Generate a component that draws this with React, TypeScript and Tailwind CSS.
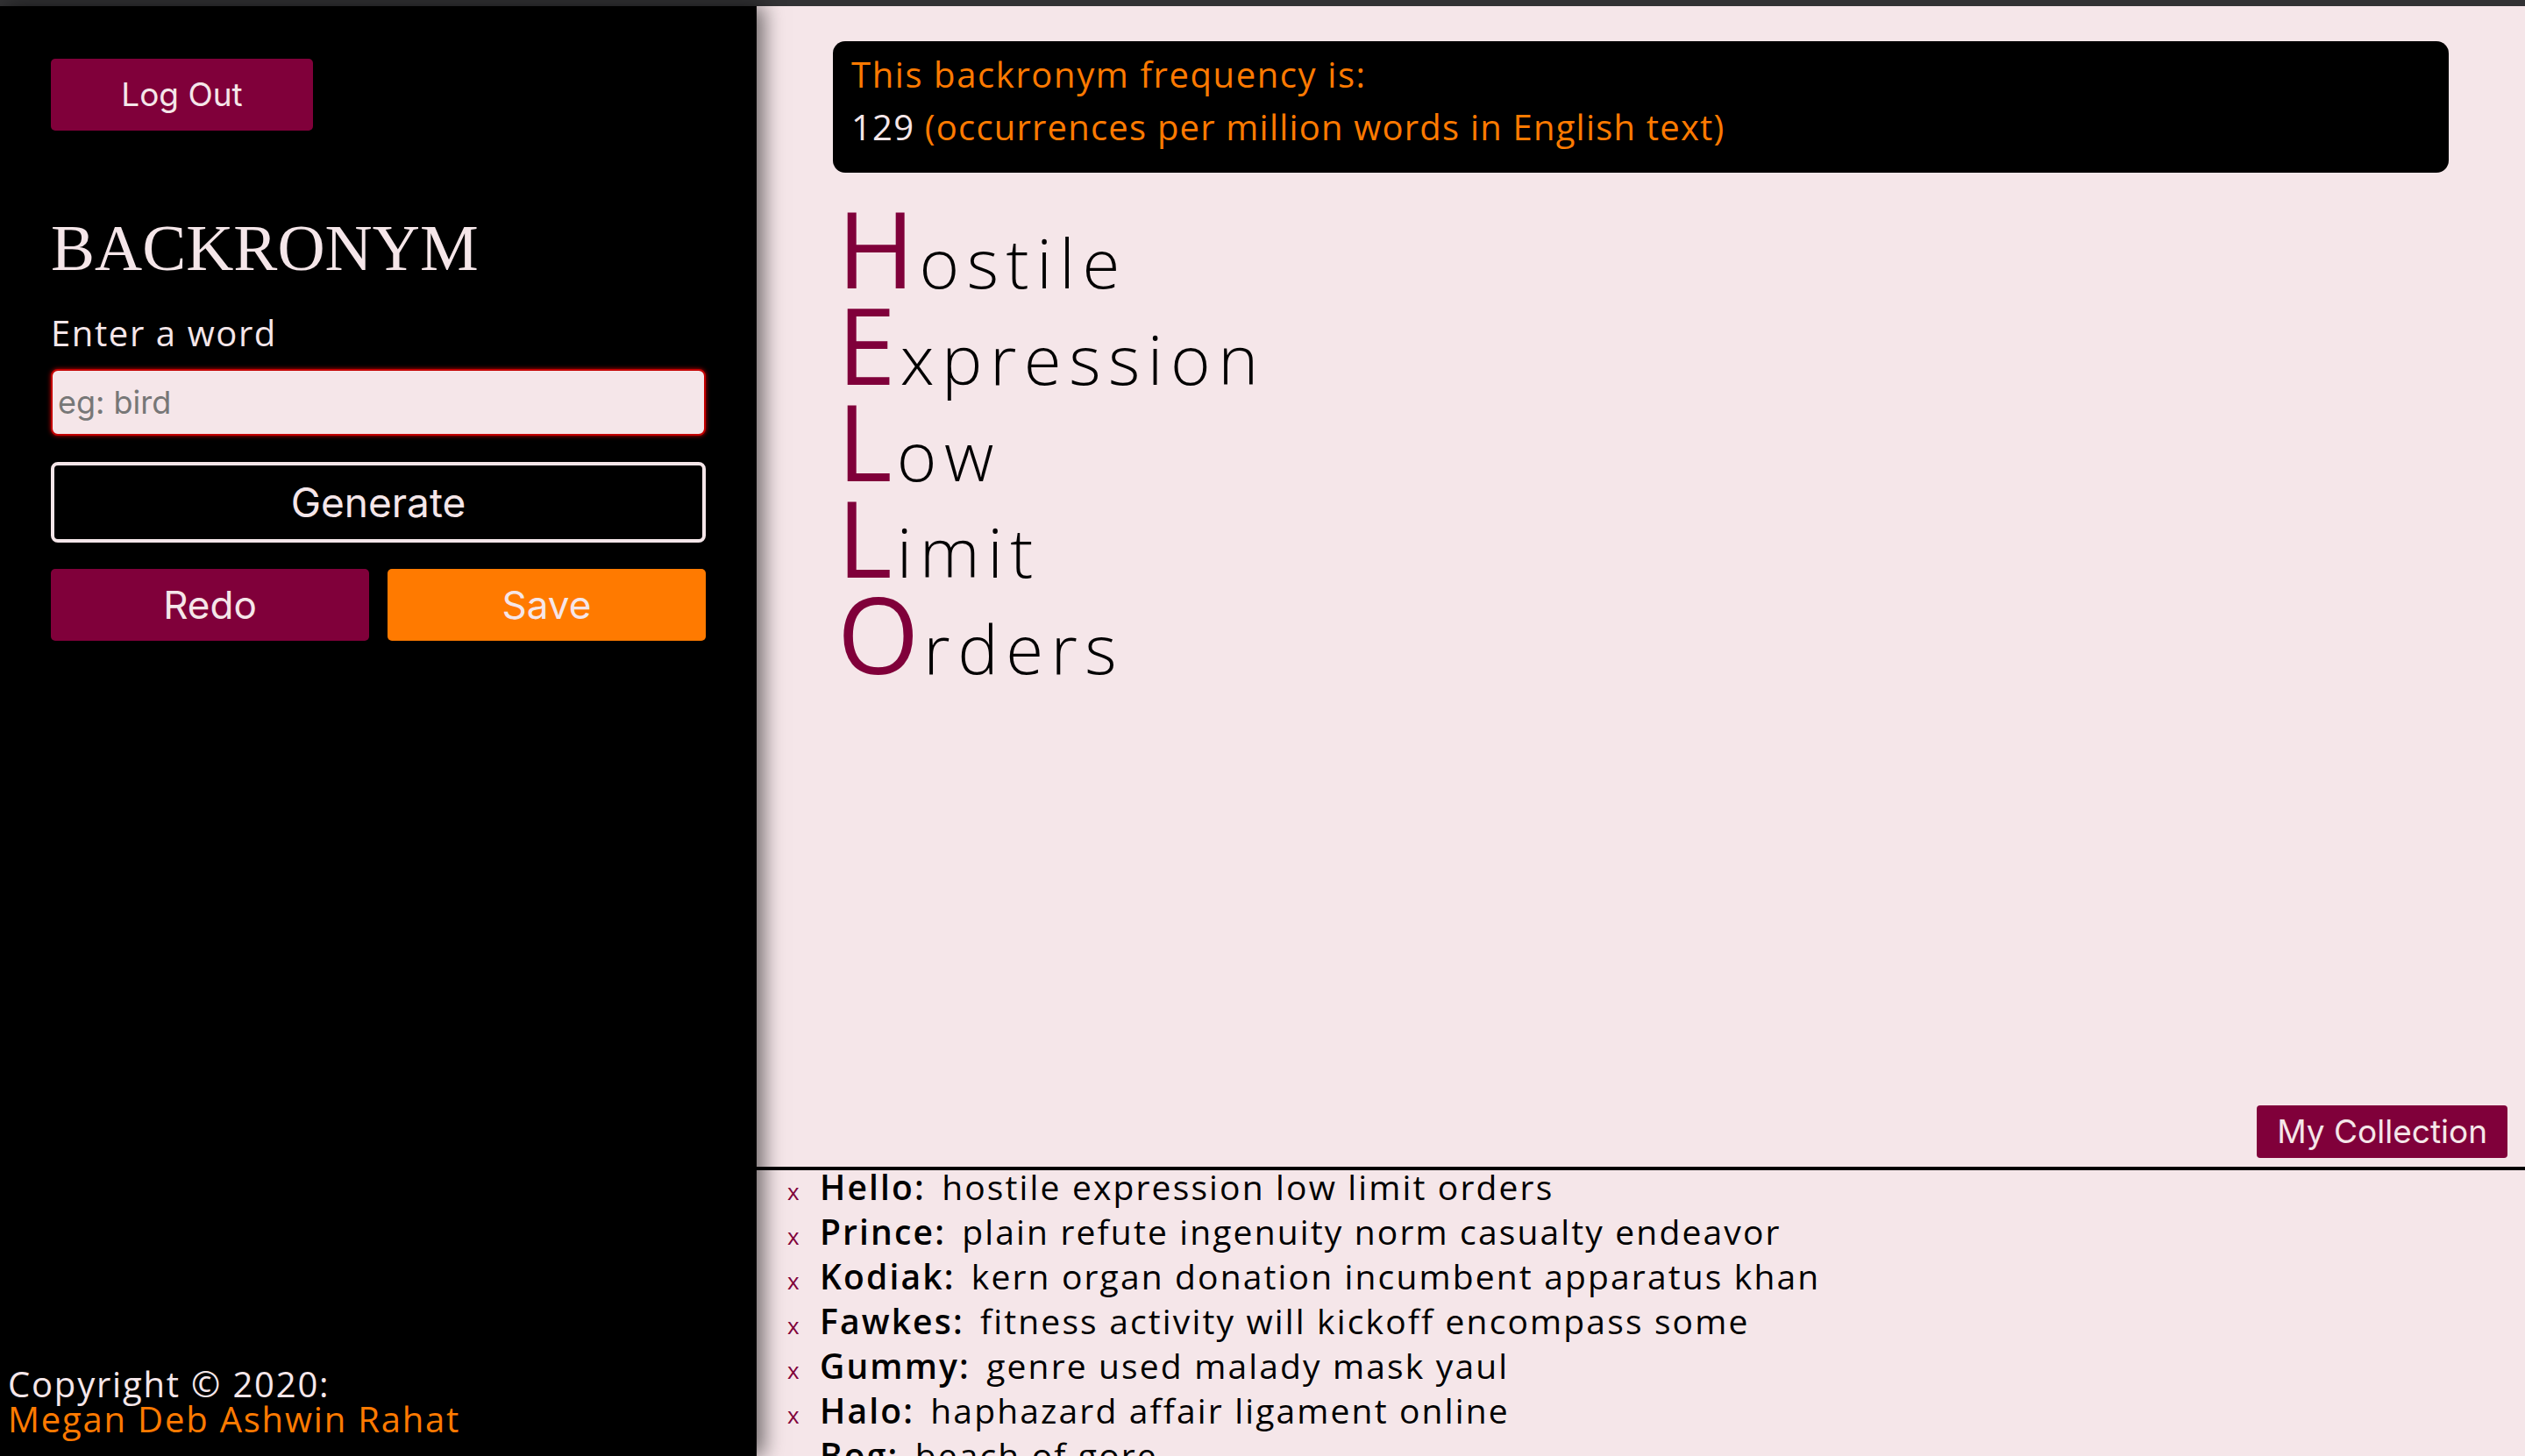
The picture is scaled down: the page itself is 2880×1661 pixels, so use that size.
import React from 'react';

const acronym: [string, string][] = [
  ['H', 'ostile'],
  ['E', 'xpression'],
  ['L', 'ow'],
  ['L', 'imit'],
  ['O', 'rders'],
];

const collection: [string, string][] = [
  ['Hello', 'hostile expression low limit orders'],
  ['Prince', 'plain refute ingenuity norm casualty endeavor'],
  ['Kodiak', 'kern organ donation incumbent apparatus khan'],
  ['Fawkes', 'fitness activity will kickoff encompass some'],
  ['Gummy', 'genre used malady mask yaul'],
  ['Halo', 'haphazard affair ligament online'],
  ['Bog', 'beach of gore'],
];

const Sidebar = () => (
  <aside className="relative z-10 flex w-[863px] shrink-0 flex-col bg-black shadow-[8px_0_22px_rgba(0,0,0,0.55)]">
    <div className="px-[58px] pt-[60px]">
      <button className="h-[82px] w-[299px] rounded-[5px] bg-[#80003a] font-['Inter',sans-serif] text-[37px] text-[#f5e6e9]">
        Log Out
      </button>

      <h1 className="mt-[96px] font-['Liberation_Serif',serif] text-[75px] leading-none text-[#f5e6e9]">
        BACKRONYM
      </h1>

      <label className="mt-[30px] block font-['Open_Sans',sans-serif] text-[40px] leading-[60px] tracking-[0.04em] text-[#f5e6e9]">
        Enter a word
      </label>
      <input
        type="text"
        placeholder="eg: bird"
        className="mt-[11px] h-[76px] w-full rounded-[8px] border-2 border-[#c40000] bg-[#f5e6e9] px-[6px] font-['Inter',sans-serif] text-[36px] text-black shadow-[0_0_5px_rgba(220,0,0,0.9)] outline-none placeholder:text-[#777]"
      />

      <button className="mt-[30px] h-[92px] w-full rounded-[8px] border-[4px] border-[#f5e6e9] bg-black font-['Inter',sans-serif] text-[46px] text-[#f5e6e9]">
        Generate
      </button>

      <div className="mt-[30px] flex gap-[21px]">
        <button className="h-[82px] flex-1 rounded-[5px] bg-[#80003a] font-['Inter',sans-serif] text-[44px] text-[#f5e6e9]">
          Redo
        </button>
        <button className="h-[82px] flex-1 rounded-[5px] bg-[#ff7a00] font-['Inter',sans-serif] text-[44px] text-[#f5e6e9]">
          Save
        </button>
      </div>
    </div>

    <footer className="mt-auto pb-[22px] pl-[9px] font-['Open_Sans',sans-serif] text-[40px] leading-[40px] tracking-[0.045em]">
      <div className="text-[#f5e6e9]">Copyright © 2020:</div>
      <div className="text-[#ff7a00]">Megan Deb Ashwin Rahat</div>
    </footer>
  </aside>
);

const Result = () => (
  <div className="flex min-h-0 flex-1 flex-col">
    <div className="mx-[87px] mt-[40px] h-[150px] rounded-[14px] bg-black pl-[21px] pt-[8px] font-['Open_Sans',sans-serif] text-[40px] leading-[60px] tracking-[0.04em] text-[#ff7a00]">
      <div>This backronym frequency is:</div>
      <div className="tracking-[0.03em]">
        <span className="text-[#f5e6e9]">129</span> (occurrences per million words in English text)
      </div>
    </div>

    <div className="ml-[92px] mt-[31px] font-['Open_Sans',sans-serif]">
      {acronym.map(([letter, rest], i) => (
        <div key={i} className="flex h-[110px] items-baseline">
          <span className="text-[120px] leading-[110px] tracking-[5px] text-[#80003a]">{letter}</span>
          <span className="text-[78px] font-light leading-[70px] tracking-[8.5px] text-black">{rest}</span>
        </div>
      ))}
    </div>

    <div className="flex-1" />
    <button className="mb-[10px] mr-[20px] h-[60px] self-end rounded-[4px] bg-[#80003a] px-[23px] font-['Inter',sans-serif] text-[37px] text-[#f5e6e9]">
      My Collection
    </button>
  </div>
);

const Collection = () => (
  <ul className="h-[326px] shrink-0 overflow-hidden pl-[35px] font-['Open_Sans',sans-serif] text-[39px] leading-[38px] tracking-[0.055em] text-black">
    {collection.map(([word, phrase]) => (
      <li key={word} className="flex h-[51px] items-baseline">
        <span className="w-[37px] shrink-0 text-[26px] tracking-normal text-[#80003a]">x</span>
        <span className="whitespace-nowrap">
          <span className="font-semibold">{word}:</span> <span className="ml-[6px]">{phrase}</span>
        </span>
      </li>
    ))}
  </ul>
);

export default function App() {
  return (
    <div className="flex h-[1661px] w-full flex-col overflow-hidden bg-black">
      <div className="h-[7px] shrink-0 bg-[#323234]" />
      <div className="flex min-h-0 flex-1">
        <Sidebar />
        <main className="flex min-w-0 flex-1 flex-col bg-[#f5e6e9]">
          <Result />
          <div className="h-[4px] shrink-0 bg-black" />
          <Collection />
        </main>
      </div>
    </div>
  );
}
